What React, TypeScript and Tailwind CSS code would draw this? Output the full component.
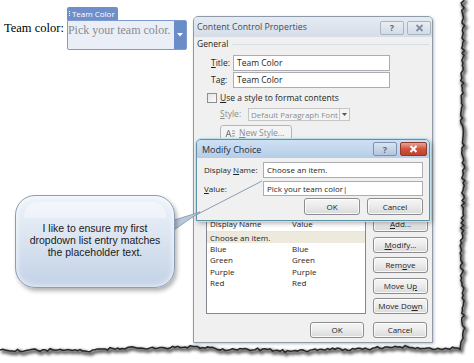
import React from "react";

const ui = "font-['Open_Sans',sans-serif] whitespace-nowrap";

function U({ children }: { children: React.ReactNode }) {
  return <span className="underline underline-offset-[1px]">{children}</span>;
}

function Btn({
  children,
  className = "",
}: {
  children: React.ReactNode;
  className?: string;
}) {
  return (
    <div
      className={`flex items-center justify-center rounded-[3px] border border-[#8d8d8d] bg-linear-to-b from-[#f6f6f6] via-[#ebebeb] to-[#d9d9d9] text-[8px] leading-none text-[#1e1e1e] shadow-[inset_0_0_0_1px_rgba(255,255,255,0.8)] ${className}`}
    >
      {children}
    </div>
  );
}

function Input({ value, className = "" }: { value: string; className?: string }) {
  return (
    <div
      className={`flex items-center border border-[#abadb3] bg-white pl-[3px] leading-none text-[#1e1e1e] ${className}`}
    >
      {value}
    </div>
  );
}

function makeEdges() {
  let s = 17;
  const rnd = () => {
    s = (s * 9301 + 49297) % 233280;
    return s / 233280;
  };
  const right: [number, number][] = [];
  for (let y = -2; y <= 338; y += 2.5) {
    right.push([462.5 + (rnd() - 0.5) * 3.2 + Math.sin(y / 23) * 0.8, y]);
  }
  right.push([461, 342]);
  const bottom: [number, number][] = [];
  for (let x = 460; x >= -2; x -= 2.5) {
    const base = 349 + Math.sin(x / 37) * 1.6 + Math.sin(x / 11) * 0.7;
    bottom.push([x, base + (rnd() - 0.5) * 2.6]);
  }
  const all = [...right, ...bottom];
  const line = all.map((p, i) => `${i ? "L" : "M"}${p[0].toFixed(1)} ${p[1].toFixed(1)}`).join(" ");
  const fill = `M474 -2 ${all.map((p) => `L${p[0].toFixed(1)} ${p[1].toFixed(1)}`).join(" ")} L-2 363 L474 363 Z`;
  return { line, fill };
}

const edges = makeEdges();

function TornEdge() {
  return (
    <svg className="pointer-events-none absolute left-0 top-0" width="474" height="363" viewBox="0 0 474 363">
      <defs>
        <filter id="blur" x="-10%" y="-10%" width="120%" height="120%">
          <feGaussianBlur stdDeviation="1.6" />
        </filter>
      </defs>
      <path d={edges.fill} fill="#ffffff" />
      <path d={edges.line} fill="none" stroke="#5a5a5a" strokeWidth="3.6" filter="url(#blur)" transform="translate(1.5 2)" />
      <path d={edges.line} fill="none" stroke="#262626" strokeWidth="1.5" />
    </svg>
  );
}

function TeamControl() {
  return (
    <div className="flex items-start pl-[4px] pt-[7px]">
      <div className="mt-[15px] whitespace-nowrap font-['Liberation_Serif',serif] text-[12.5px] leading-none text-black">
        Team color:
      </div>
      <div className="ml-[3px] flex flex-col">
        <div className="flex h-[13px] w-[51px] items-center gap-[2px] rounded-t-[2px] bg-[#6f8fcb] pl-[2px] text-[8px] leading-none text-white">
          <span className="flex flex-col gap-[1px]">
            <span className="h-[1px] w-[1px] bg-white" />
            <span className="h-[1px] w-[1px] bg-white" />
            <span className="h-[1px] w-[1px] bg-white" />
          </span>
          <span className={ui}>Team Color</span>
        </div>
        <div className="flex h-[30px] w-[120px] rounded-b-[2px] rounded-tr-[2px] border border-[#7d9bd0] bg-[#e9eef7]">
          <div className="flex-1 overflow-hidden whitespace-nowrap pt-[2px] font-['Liberation_Serif',serif] text-[12px] leading-[14px] text-[#8c8c8c]">
            Pick your team color.
          </div>
          <div className="flex w-[12px] shrink-0 items-start justify-center bg-[#6a8cc8] pt-[12px]">
            <svg width="6" height="4" viewBox="0 0 6 4">
              <path d="M0 0 H6 L3 3.5 Z" fill="#ffffff" />
            </svg>
          </div>
        </div>
      </div>
    </div>
  );
}

function TitleButtons({ active }: { active?: boolean }) {
  return (
    <div className="flex gap-[3px]">
      <div
        className={`flex h-[14px] w-[24px] items-center justify-center rounded-[2px] border ${
          active ? "border-[#7d93ad] bg-linear-to-b from-[#d9e4f1] to-[#b3c5db]" : "border-[#aab4c0] bg-linear-to-b from-[#e9eef4] to-[#d3dbe5]"
        } text-[9px] font-bold leading-none text-[#5b6b80]`}
      >
        ?
      </div>
      <div
        className={`flex h-[14px] items-center justify-center rounded-[2px] border ${
          active ? "w-[27px] border-[#8a3a30] bg-linear-to-b from-[#e8a493] via-[#d0533d] to-[#c0402b]" : "w-[24px] border-[#aab4c0] bg-linear-to-b from-[#e9eef4] to-[#d3dbe5]"
        }`}
      >
        <svg width="9" height="8" viewBox="0 0 9 8">
          <path d="M1.5 1 L7.5 7 M7.5 1 L1.5 7" stroke={active ? "#ffffff" : "#7f8ea0"} strokeWidth={active ? 2 : 1.8} />
        </svg>
      </div>
    </div>
  );
}

function ContentControlDialog() {
  const rows = [
    ["Blue", "Blue"],
    ["Green", "Green"],
    ["Purple", "Purple"],
    ["Red", "Red"],
  ];
  return (
    <div className={`mt-[16px] flex h-[327px] w-[240px] flex-col rounded-t-[5px] border border-[#8e9aa8] bg-[#f0f0f0] ${ui} text-[8.5px] leading-none text-[#1e1e1e] shadow-[1px_1px_3px_rgba(0,0,0,0.25)]`}>
      <div className="flex h-[20px] items-center justify-between rounded-t-[4px] bg-linear-to-b from-[#e6ebf2] to-[#d5dde8] pl-[3px] pr-[1px] pt-[1px]">
        <span className="text-[8.75px] text-[#3d4a5a]">Content Control Properties</span>
        <TitleButtons />
      </div>
      <div className="flex flex-col px-[3px]">
        <div className="mt-[2px] flex h-[11px] items-center gap-[4px]">
          <span>General</span>
          <span className="h-[1px] flex-1 bg-[#d5dfe5]" />
        </div>
        <div className="mt-[5px] flex h-[16px] items-center">
          <span className="w-[36px] pl-[14px]">
            <U>T</U>itle:
          </span>
          <Input value="Team Color" className="h-[16px] w-[157px] text-[8.5px]" />
        </div>
        <div className="mt-[1px] flex h-[16px] items-center">
          <span className="w-[36px] pl-[14px]">
            Ta<U>g</U>:
          </span>
          <Input value="Team Color" className="h-[16px] w-[157px] text-[8.5px]" />
        </div>
        <div className="mt-[5px] flex h-[10px] items-center pl-[10px]">
          <span className="h-[10px] w-[10px] border border-[#8e8f8f] bg-linear-to-br from-[#e4e4e4] to-[#fbfbfb]" />
          <span className="ml-[3px]">
            <U>U</U>se a style to format contents
          </span>
        </div>
        <div className="mt-[5px] flex h-[13px] items-center pl-[23px] text-[#8d8d8d]">
          <span className="w-[28px]">
            <U>S</U>tyle:
          </span>
          <div className="flex h-[13px] w-[102px] items-center justify-between border border-[#c5c5c5] bg-[#f4f4f4] pl-[2px] text-[8px]">
            <span>Default Paragraph Font</span>
            <span className="flex h-[11px] w-[10px] items-center justify-center border-l border-[#c5c5c5]">
              <svg width="5" height="3" viewBox="0 0 5 3">
                <path d="M0 0 H5 L2.5 3 Z" fill="#555" />
              </svg>
            </span>
          </div>
        </div>
        <div className="ml-[23px] mt-[4px] flex h-[16px] w-[72px] items-center gap-[3px] rounded-[3px] border border-[#b5b5b5] bg-[#f4f4f4] pl-[4px] text-[#8d8d8d]">
          <svg width="11" height="9" viewBox="0 0 11 9">
            <path d="M1 8 L3.5 1 L6 8 M2 5.5 H5" stroke="#7a7a7a" strokeWidth="1" fill="none" />
            <path d="M7 2 H10 M7 4.5 H10 M7 7 H10" stroke="#9a9a9a" strokeWidth="1" />
          </svg>
          <span>
            <U>N</U>ew Style...
          </span>
        </div>
        <div className="mt-[75px] flex gap-[7px] pl-[9px] text-[8px]">
          <div className="flex h-[98px] w-[160px] flex-col border border-[#828790] bg-white">
            <div className="flex h-[15px] items-center border-b border-[#e5e5e5] pl-[3px]">
              <span className="w-[82px]">Display Name</span>
              <span>Value</span>
            </div>
            <div className="flex h-[11.4px] items-center bg-[#ede9dc] pl-[3px]">
              <span>Choose an item.</span>
            </div>
            {rows.map(([a, b]) => (
              <div key={a} className="flex h-[11.4px] items-center pl-[3px]">
                <span className="w-[82px]">{a}</span>
                <span>{b}</span>
              </div>
            ))}
          </div>
          <div className="flex flex-col gap-[4.5px]">
            <Btn className="h-[16px] w-[55px]">
              <span>
                <U>A</U>dd...
              </span>
            </Btn>
            <Btn className="h-[16px] w-[55px]">
              <span>
                <U>M</U>odify...
              </span>
            </Btn>
            <Btn className="h-[16px] w-[55px]">
              <span>
                Rem<U>o</U>ve
              </span>
            </Btn>
            <Btn className="h-[16px] w-[55px]">
              <span>
                Move U<U>p</U>
              </span>
            </Btn>
            <Btn className="h-[16px] w-[55px]">
              <span>
                Move Do<U>w</U>n
              </span>
            </Btn>
          </div>
        </div>
        <div className="mt-[8px] flex justify-end gap-[9px] pr-[2px]">
          <Btn className="h-[16px] w-[54px]">OK</Btn>
          <Btn className="h-[16px] w-[54px]">Cancel</Btn>
        </div>
      </div>
    </div>
  );
}

function ModifyChoice() {
  return (
    <div className={`absolute left-[196px] top-[139px] flex h-[82px] w-[234px] flex-col rounded-t-[5px] border border-[#5a93a8] bg-[#f0f0f0] ${ui} text-[8px] leading-none text-[#1e1e1e] shadow-[0_0_0_1px_#bfe0ea,2px_2px_5px_rgba(0,0,0,0.35)]`}>
      <div className="flex h-[18px] items-center justify-between rounded-t-[4px] bg-linear-to-b from-[#cfe0f3] to-[#b6cde8] pl-[5px] pr-[2px]">
        <span className="text-[9px] text-[#1f2d40]">Modify Choice</span>
        <TitleButtons active />
      </div>
      <div className="flex flex-col pl-[7px] pr-[6px]">
        <div className="mt-[4px] flex h-[16px] items-center">
          <span className="w-[59px]">
            Display <U>N</U>ame:
          </span>
          <Input value="Choose an item." className="h-[16px] flex-1 text-[8px]" />
        </div>
        <div className="mt-[3px] flex h-[15px] items-center">
          <span className="w-[59px]">
            <U>V</U>alue:
          </span>
          <Input value="Pick your team color|" className="h-[15px] flex-1 text-[8px]" />
        </div>
        <div className="mt-[2px] flex justify-end gap-[7px]">
          <Btn className="h-[17px] w-[56px] border-[#3c7fb1] shadow-[inset_0_0_0_1px_#bfe6f6]">OK</Btn>
          <Btn className="h-[17px] w-[56px]">Cancel</Btn>
        </div>
      </div>
    </div>
  );
}

function Callout() {
  return (
    <>
      <svg className="pointer-events-none absolute left-0 top-0" width="474" height="363" viewBox="0 0 474 363">
        <path d="M168 222 L200 212 L168 234 Z" fill="#b9c8da" stroke="#7f93aa" strokeWidth="0.8" />
        <line x1="196" y1="215" x2="262" y2="181" stroke="#8c9db0" strokeWidth="1" />
      </svg>
      <div className="absolute left-[15px] top-[195px] flex h-[93px] w-[160px] items-center justify-center rounded-[20px] border border-[#8c9cb2] bg-linear-to-b from-[#eef3fa] via-[#d9e3f0] to-[#c3d2e6] shadow-[2px_3px_4px_rgba(0,0,0,0.3),inset_0_0_6px_rgba(255,255,255,0.9)]">
        <div className="absolute left-[8px] right-[8px] top-[6px] h-[16px] rounded-t-[14px] bg-white/40" />
        <div className="relative -mt-[3px] whitespace-nowrap text-center font-['Liberation_Sans',sans-serif] text-[10.5px] leading-[12px] text-[#1a1a1a]">
          I like to ensure my first
          <br />
          dropdown list entry matches
          <br />
          the placeholder text.
        </div>
      </div>
    </>
  );
}

export default function App() {
  return (
    <div className="relative h-[363px] w-[474px] overflow-hidden bg-white">
      <div className="flex">
        <div className="w-[193px] shrink-0">
          <TeamControl />
        </div>
        <ContentControlDialog />
      </div>
      <ModifyChoice />
      <Callout />
      <TornEdge />
    </div>
  );
}
